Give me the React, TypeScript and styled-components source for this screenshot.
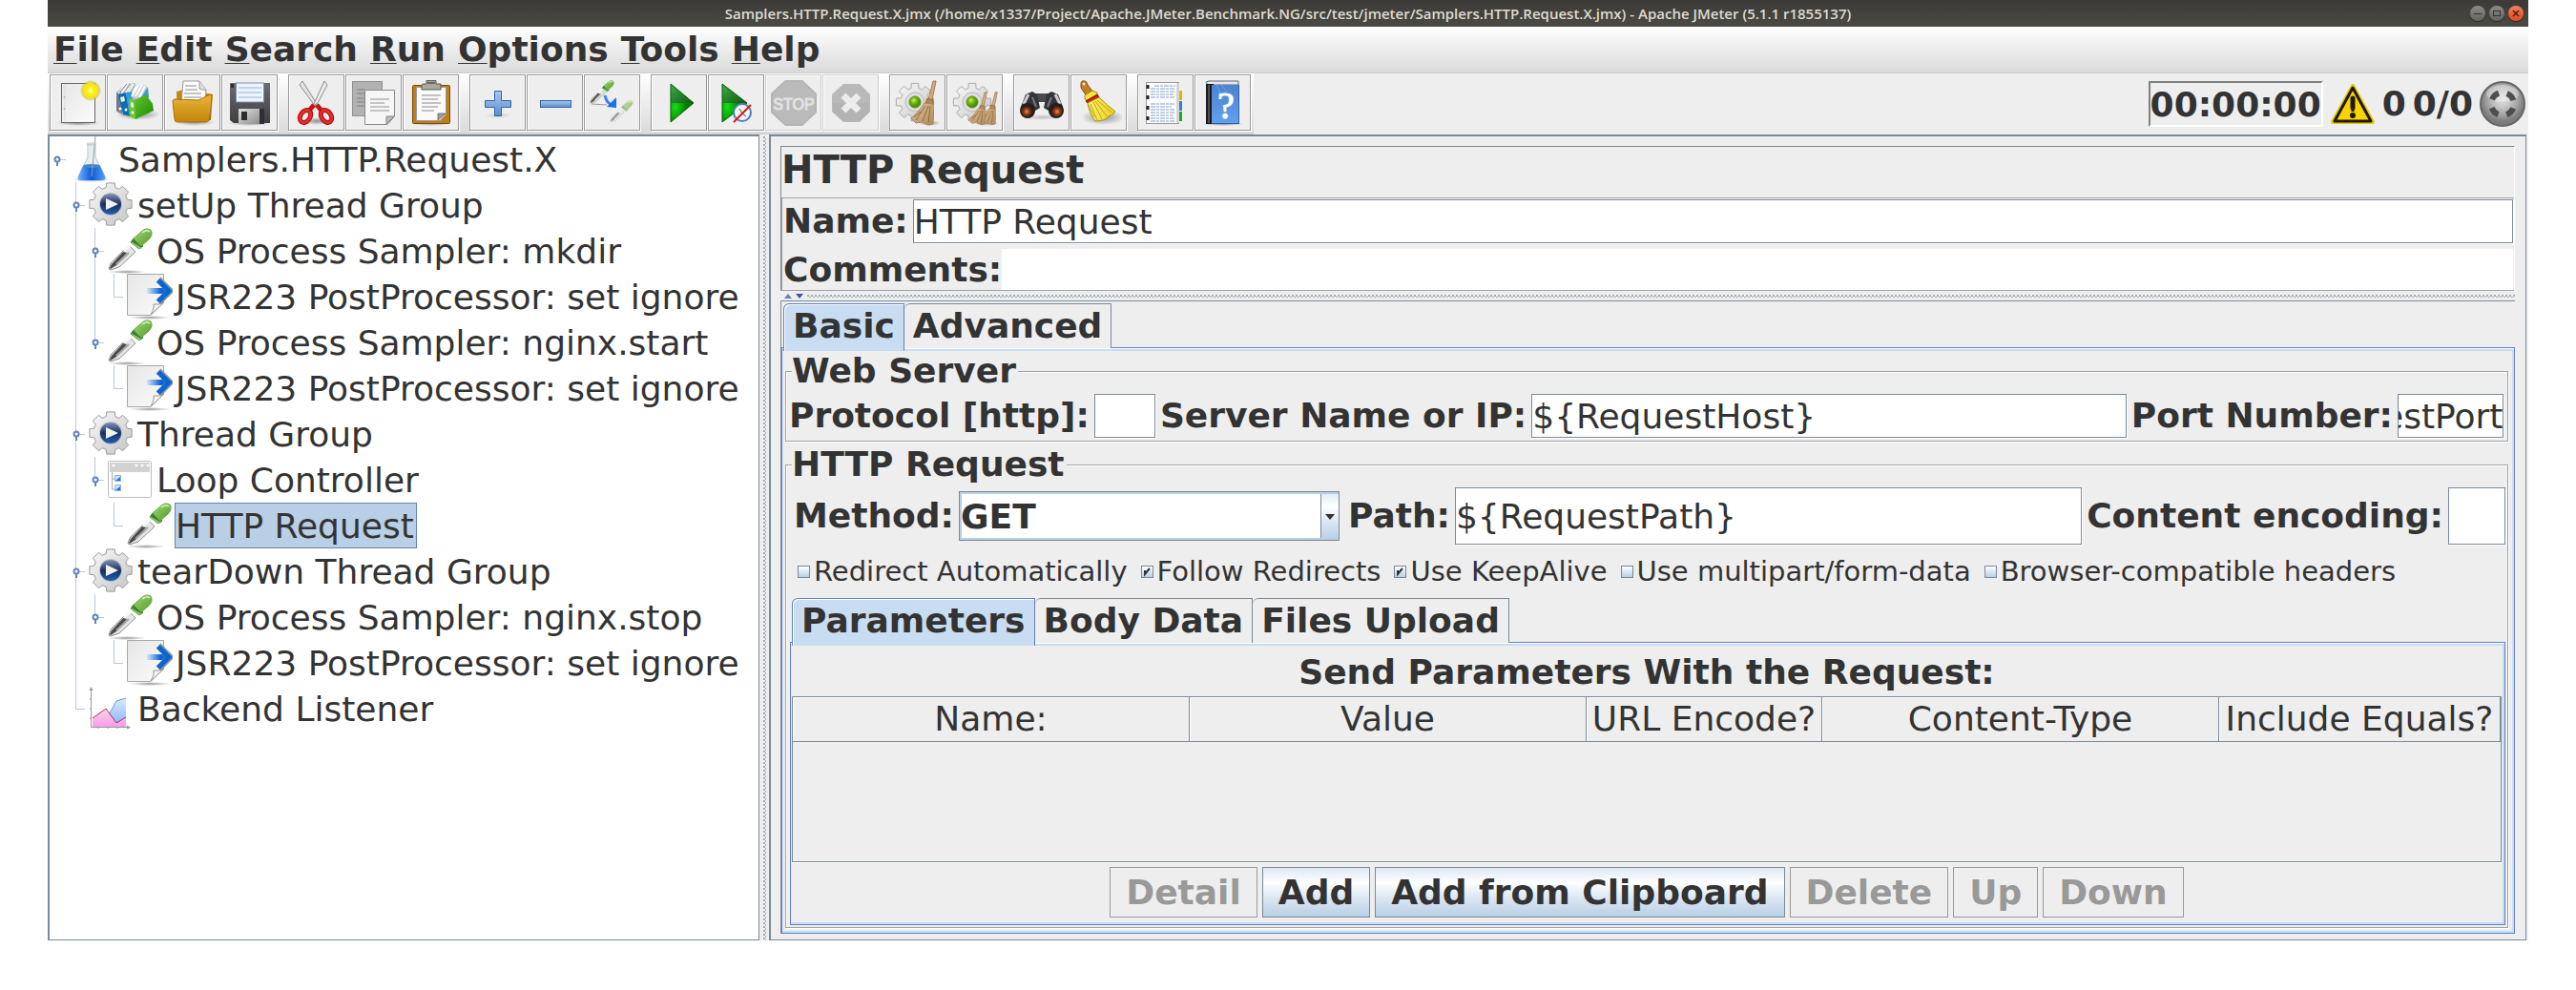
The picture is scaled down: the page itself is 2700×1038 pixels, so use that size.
import React, { useEffect, useRef, useState } from "react";
import styled, { createGlobalStyle, css } from "styled-components";

const SLATE = "#7a8a99";
const BLUE = "#6382bf";
const SKY = "#c8ddf2";
const PANEL = "#eeeeee";
const INK = "#333333";
const LINE = "#a3a3a3";

const GlobalStyle = createGlobalStyle`
  * { box-sizing: border-box; }
  body { margin: 0; background: #fff; }
  body, button, input, select, table {
    font-family: "DejaVu Sans", "Noto Sans", sans-serif;
    color: ${INK};
  }
`;

/* ---------- window frame ---------- */

const Page = styled.div`
  padding: 0 50px;
  font-size: 36px;
  line-height: 42px;
`;

const Frame = styled.div`
  background: ${PANEL};
`;

const TitleBar = styled.header`
  display: grid;
  grid-template-columns: 1fr auto 1fr;
  align-items: center;
  height: 28px;
  padding: 0 5px;
  background: linear-gradient(#3b3a36, #4b4a44);
`;

const Title = styled.h1`
  grid-column: 2;
  margin: 0;
  font: 600 15px/20px "Open Sans", "Noto Sans", sans-serif;
  color: #dfdbd2;
  white-space: nowrap;
`;

const WindowControls = styled.div`
  display: flex;
  justify-content: flex-end;
  gap: 4px;
`;

const WindowButton = styled.button<{ $close?: boolean }>`
  width: 16px;
  height: 16px;
  padding: 0;
  border: 0;
  border-radius: 50%;
  display: flex;
  background: ${(p) => (p.$close ? "linear-gradient(#f4805c, #e0491c)" : "linear-gradient(#8c8b84, #64635d)")};
  box-shadow: 0 1px 1px #2c2b28;
`;

const MenuBar = styled.nav`
  display: flex;
  gap: 13px;
  height: 49px;
  padding: 3px 0 0 6px;
  border-bottom: 1px solid #ccc;
  background: linear-gradient(#fff, #dadada);
`;

const MenuItem = styled.button`
  padding: 0;
  border: 0;
  background: none;
  font-size: 36px;
  line-height: 42px;
  font-weight: bold;
  height: 42px;

  &::first-letter {
    text-decoration: underline;
    text-decoration-thickness: 1px;
    text-underline-offset: 2px;
    text-decoration-skip-ink: none;
  }
`;

const ToolRow = styled.div`
  display: flex;
  justify-content: space-between;
`;

const ToolBar = styled.div`
  display: flex;
  gap: 11px;
  height: 64px;
  padding: 1px 3px 2px 2px;
  background: linear-gradient(#fff, #dadada);
  border-bottom: 1px solid #ccc;
`;

const ToolGroup = styled.div`
  display: flex;
  gap: 1px;
`;

const ToolButton = styled.button`
  width: 59px;
  height: 59px;
  padding: 0;
  display: flex;
  align-items: center;
  justify-content: center;
  border: 1px solid #999;
  background: ${PANEL};
  box-shadow: inset 1px 1px #fff, 1px 1px #fff;

  &:disabled { border-color: #ccc; }
`;

const Status = styled.div`
  display: flex;
  align-items: center;
  gap: 7px;
  padding-right: 3px;
  font-weight: bold;
`;

const Timer = styled.div`
  padding: 2px 0 0;
  border: 2px solid;
  border-color: #808080 #fff #fff #808080;
`;

/* ---------- tree ---------- */

const Workspace = styled.main`
  display: flex;
  padding-right: 2px;
`;

const TreePane = styled.ul`
  flex: 0 0 746px;
  margin: 0;
  padding: 0;
  list-style: none;
  overflow: hidden;
  background: #fff;
  border: solid ${SLATE};
  border-width: 2px 1px 1px 2px;
`;

const TreeRow = styled.li`
  display: flex;
  align-items: center;
  height: 48px;
  white-space: nowrap;
`;

const Guide = styled.span<{ $line: "none" | "half" | "full"; $own: boolean }>`
  flex: 0 0 20px;
  align-self: stretch;
  background-repeat: no-repeat;
  background-image: linear-gradient(${(p) => (p.$line === "none" ? "transparent, transparent" : "#b8c9dd, #b8c9dd")}),
    linear-gradient(${(p) => (p.$own ? "#b8c9dd, #b8c9dd" : "transparent, transparent")});
  background-size: 1px ${(p) => (p.$line === "half" ? "50%" : "100%")}, 10px 1px;
  background-position: 7px 0, 7px 24px;
`;

const Handle = styled.svg`
  display: block;
  width: 20px;
  height: 48px;
`;

const NodeIcon = styled.span`
  flex: 0 0 48px;
  height: 48px;
  margin: 0 2px 0 1px;
  display: flex;
`;

const NodeLabel = styled.span<{ $selected?: boolean }>`
  height: 48px;
  line-height: 48px;
  padding: 0 2px 0 0;
  border: 1px solid transparent;
  border-bottom-width: 0;
  ${(p) => p.$selected && css`
    line-height: 46px;
    padding-top: 1px;
    background: #b8cfe5;
    border-color: ${BLUE};
    border-bottom-width: 1px;
  `}
`;

const dots = css`
  background-color: ${PANEL};
  background-image: radial-gradient(circle at 1px 1px, #a3aeb8 1px, transparent 1px),
    radial-gradient(circle at 3px 3px, #a3aeb8 1px, transparent 1px);
  background-size: 4px 4px;
`;

const ColumnSplitter = styled.div`
  flex: 0 0 10px;
  padding: 2px 3px 0 4px;
  background: ${PANEL};
  &::before {
    content: "";
    display: block;
    width: 3px;
    height: 100%;
    ${dots}
  }
`;

/* ---------- editor ---------- */

const Editor = styled.section`
  flex: 1;
  min-width: 0;
  padding: 10px 11px 6px 10px;
  border: solid ${SLATE};
  border-width: 2px 1px 1px 2px;
`;

const HeadPanel = styled.div`
  border: solid;
  border-width: 1px 1px 0 1px;
  border-color: ${SLATE} #fff #fff ${SLATE};
`;

const EditorTitle = styled.h2`
  margin: 0;
  padding-bottom: 5px;
  font-size: 40px;
  line-height: 48px;
`;

const NamePanel = styled.div`
  display: flex;
  flex-direction: column;
  gap: 6px;
  padding: 1px 1px 0 1px;
  border: solid ${LINE};
  border-width: 1px 0 1px 1px;
`;

const NameRow = styled.div<{ $gap: number }>`
  display: flex;
  align-items: center;
  gap: ${(p) => p.$gap}px;
`;

const FieldLabel = styled.label`
  font-weight: bold;
  white-space: nowrap;
`;

const TextField = styled.input<{ $height?: number; $width?: number; $plain?: boolean }>`
  flex: ${(p) => (p.$width ? `0 0 ${p.$width}px` : "1 1 0")};
  min-width: 0;
  width: ${(p) => (p.$width ? `${p.$width}px` : "auto")};
  height: ${(p) => p.$height ?? 46}px;
  padding: 0;
  border: ${(p) => (p.$plain ? "0" : `1px solid ${SLATE}`)};
  border-radius: 0;
  outline: none;
  background: #fff;
  font-size: 36px;
  box-shadow: ${(p) => (p.$plain ? "none" : "1px 1px #fff")};
`;

const RowSplitter = styled.div`
  display: flex;
  align-items: center;
  gap: 4px;
  height: 10px;
  padding-left: 4px;
  &::after {
    content: "";
    flex: 1;
    height: 3px;
    ${dots}
  }
`;

const Arrow = styled.svg`
  width: 8px;
  height: 5px;
`;

const TabArea = styled.div`
  padding-top: 2px;
  border-top: 1px solid ${SLATE};
  border-left: 1px solid ${SLATE};
`;

const TabList = styled.div`
  display: flex;
  padding-left: 2px;
`;

const Tab = styled.button<{ $active: boolean }>`
  height: 47px;
  margin-bottom: -1px;
  padding: 0 9px 1px;
  font-size: 36px;
  line-height: 42px;
  font-weight: bold;
  border: 1px solid ${SLATE};
  border-left-width: 0;
  border-bottom: 0;
  border-top-left-radius: 6px;
  background: ${PANEL};
  ${(p) => p.$active && css`
    position: relative;
    z-index: 1;
    height: 50px;
    margin-bottom: -4px;
    padding: 0 9px 4px;
    border-color: ${BLUE};
    border-left-width: 1px;
    background: ${SKY};
    box-shadow: inset 1px 1px #fff;
  `}
`;

const TabPane = styled.div<{ $pad: string }>`
  padding: ${(p) => p.$pad};
  border: 1px solid ${BLUE};
  box-shadow: inset 0 1px #fff, inset 0 3px ${SKY}, inset -2px -2px ${SKY}, inset 1px 0 #dfeaf6;
`;

const Group = styled.fieldset<{ $pad: string }>`
  min-width: 0;
  margin: 0;
  padding: ${(p) => p.$pad};
  border: 1px solid ${LINE};
  box-shadow: inset 1px 1px #fff, 1px 1px #fff;
  & + & { margin-top: 3px; }
`;

const Legend = styled.legend`
  margin-left: 4px;
  padding: 0 2px 0 0;
  font-weight: bold;
  background: ${PANEL};
`;

const FormRow = styled.div<{ $indent?: boolean }>`
  display: flex;
  align-items: center;
  gap: 5px;
  padding-left: ${(p) => (p.$indent ? 6 : 1)}px;
`;

const SelectBox = styled.div`
  position: relative;
  flex: 0 0 399px;
  display: flex;
  height: 52px;
  margin-right: 4px;
  &::after {
    content: "";
    position: absolute;
    right: 5px;
    top: 24px;
    border: 5px solid transparent;
    border-top: 6px solid ${INK};
    border-bottom: 0;
    pointer-events: none;
  }
`;

const Select = styled.select`
  appearance: none;
  flex: 1;
  padding: 0 0 0 1px;
  border: 1px solid ${SLATE};
  border-radius: 0;
  font-size: 36px;
  font-weight: bold;
  background: linear-gradient(${SLATE}, ${SLATE}) right 18px top / 1px 100% no-repeat,
    linear-gradient(#dde8f3, #fff 30%, #dde8f3 60%, #b8cfe5) right / 18px 100% no-repeat, #fff;
  box-shadow: inset 2px 2px #b8cfe5, inset 0 -2px #b8cfe5;
`;

const CheckRow = styled.div`
  display: flex;
  align-items: center;
  gap: 14px;
  height: 56px;
  padding-left: 10px;
  font-size: 29px;
  line-height: 34px;
`;

const CheckLabel = styled.label`
  display: flex;
  align-items: center;
  gap: 4px;
  white-space: nowrap;
`;

const CheckBox = styled.input`
  appearance: none;
  width: 13px;
  height: 13px;
  margin: 0;
  border: 1px solid ${SLATE};
  background: linear-gradient(#fff, #b8cfe5);
  &:checked {
    background: url("data:image/svg+xml,%3Csvg xmlns='http://www.w3.org/2000/svg' viewBox='0 0 11 11'%3E%3Cpath d='M3 4v4l5-6' fill='none' stroke='%23333' stroke-width='2'/%3E%3C/svg%3E"),
      linear-gradient(#fff, #b8cfe5);
  }
`;

const InnerTabs = styled.div`
  padding: 0 0 0 2px;
`;

const ParamTitle = styled.h3`
  margin: 0;
  padding: 4px 0 2px;
  font-size: 36px;
  line-height: 46px;
  text-align: center;
`;

const TableBox = styled.div`
  min-height: 174px;
  border: 1px solid ${SLATE};
  box-shadow: 0 1px #fff;
`;

const ParamTable = styled.table`
  width: 100%;
  table-layout: fixed;
  border-spacing: 0;
`;

const HeadCell = styled.th<{ $width?: number }>`
  width: ${(p) => (p.$width ? `${p.$width}px` : "auto")};
  height: 47px;
  padding: 0;
  font-weight: normal;
  white-space: nowrap;
  border-right: 1px solid ${SLATE};
  border-bottom: 1px solid ${SLATE};
  box-shadow: inset 1px 1px #fff;
`;

const ButtonRow = styled.div`
  display: flex;
  justify-content: center;
  gap: 5px;
  padding: 5px 0;
`;

const ActionButton = styled.button`
  height: 53px;
  padding: 0 16px;
  border: 1px solid ${SLATE};
  font-size: 36px;
  font-weight: bold;
  background: linear-gradient(#dde8f3, #fff 30%, #dde8f3 60%, #b8cfe5);
  &:disabled {
    color: #999;
    border-color: #999;
    background: ${PANEL};
  }
`;

/* ---------- drawings ---------- */

const Drawing = styled.svg<{ $size: number }>`
  display: block;
  width: ${(p) => p.$size}px;
  height: ${(p) => p.$size}px;
`;

const HiddenDefs = styled.svg`
  position: absolute;
  width: 0;
  height: 0;
`;

const stops = (...colors: string[]) =>
  colors.map((c, i) => <stop key={i} offset={i / (colors.length - 1)} stopColor={c} />);

const Defs = () => (
  <HiddenDefs aria-hidden="true">
    <defs>
      <linearGradient id="paper" x1="0" y1="0" x2="1" y2="1">{stops("#e6e6e6", "#fbfbfb")}</linearGradient>
      <radialGradient id="sun">
        <stop offset="0" stopColor="#ffffd0" />
        <stop offset="0.3" stopColor="#fff21a" />
        <stop offset="0.7" stopColor="#f2e413" />
        <stop offset="1" stopColor="#a89a30" stopOpacity="0" />
      </radialGradient>
      <linearGradient id="gold" x1="0" y1="0" x2="0" y2="1">{stops("#eab53a", "#c48509")}</linearGradient>
      <linearGradient id="goldBack" x1="0" y1="0" x2="0" y2="1">{stops("#c8900f", "#a06a05")}</linearGradient>
      <linearGradient id="greenBox" x1="0" y1="0" x2="1" y2="1">{stops("#5fc72c", "#1f8a04")}</linearGradient>
      <linearGradient id="dark" x1="0" y1="0" x2="0" y2="1">{stops("#6b6b70", "#3f3f43")}</linearGradient>
      <linearGradient id="metal" x1="0" y1="0" x2="1" y2="1">{stops("#e0e0e0", "#8e8e8e")}</linearGradient>
      <linearGradient id="plus" x1="0" y1="0" x2="0" y2="1">{stops("#a9c8ec", "#5b8fd0")}</linearGradient>
      <linearGradient id="playTop" x1="0" y1="0" x2="1" y2="1">{stops("#3fae46", "#0e5a12")}</linearGradient>
      <radialGradient id="playLow" cx="0.2" cy="0.6">{stops("#12e012", "#007a00")}</radialGradient>
      <linearGradient id="gearFill" x1="0" y1="0" x2="1" y2="1">{stops("#fafafa", "#c4c4c4")}</linearGradient>
      <radialGradient id="lamp" cx="0.4" cy="0.35">{stops("#c8f56a", "#74bd0e", "#4f8f06")}</radialGradient>
      <linearGradient id="navy" x1="0" y1="0" x2="0" y2="1">{stops("#8492b4", "#16305f", "#1f62b4")}</linearGradient>
      <linearGradient id="straw" x1="0" y1="0" x2="1" y2="1">{stops("#e0c59c", "#b08a5c")}</linearGradient>
      <linearGradient id="yellow" x1="0" y1="0" x2="1" y2="0">{stops("#fff36a", "#e8cf1a")}</linearGradient>
      <radialGradient id="lens">{stops("#f08a4a", "#9a3c12", "#2a1a14")}</radialGradient>
      <linearGradient id="book" x1="0" y1="0" x2="0" y2="1">{stops("#4a83d2", "#62a0ee")}</linearGradient>
      <radialGradient id="knob" cx="0.5" cy="0.4">{stops("#dedede", "#c8c8c8", "#a8a8a8", "#7c7c7c")}</radialGradient>
      <linearGradient id="liquid" x1="0" y1="0" x2="1" y2="0">{stops("#6fb2ff", "#0a5bd6", "#5aa0f6")}</linearGradient>
      <linearGradient id="bulb" x1="0" y1="0" x2="1" y2="1">{stops("#a5d873", "#4f9a2c")}</linearGradient>
      <linearGradient id="arrowFade" x1="0" y1="0" x2="1" y2="0">
        <stop offset="0" stopColor="#1070e0" stopOpacity="0.1" />
        <stop offset="0.7" stopColor="#0b64d8" />
      </linearGradient>
      <linearGradient id="areaBlue" x1="0" y1="0" x2="0" y2="1">{stops("#dcebff", "#7fb2f5")}</linearGradient>
      <linearGradient id="areaPink" x1="0" y1="0" x2="0" y2="1">{stops("#fbd8d8", "#f79af0")}</linearGradient>
      <radialGradient id="shade">
        <stop offset="0" stopColor="#000" stopOpacity="0.4" />
        <stop offset="1" stopColor="#000" stopOpacity="0" />
      </radialGradient>
    </defs>
  </HiddenDefs>
);

function gearPath(cx: number, cy: number, outer: number, root: number) {
  const points: string[] = [];
  for (let i = 0; i < 8; i++) {
    const mid = (i * Math.PI) / 4 - Math.PI / 2;
    const corner = (r: number, a: number) => `${(cx + r * Math.cos(mid + a)).toFixed(2)} ${(cy + r * Math.sin(mid + a)).toFixed(2)}`;
    points.push(corner(root, -0.27), corner(outer, -0.19), corner(outer, 0.19), corner(root, 0.27));
  }
  return `M${points.join("L")}Z`;
}

const Dropper = () => (
  <g>
    <path d="M3 37 L22 18 L29 25 L12 41 L3 44 L1 43Z" fill="#e4e6e6" stroke="#8f9294" strokeWidth="1" />
    <path d="M4 38 L16 25 L20 26 L9 39 L3 43 L2 42Z" fill="#4c4c4c" />
    <path d="M9 38 L22 26" stroke="#a4a4a4" strokeWidth="2" />
    <path d="M17 24 L26 16" stroke="#fafafa" strokeWidth="3" />
    <path d="M27 11 L37 19 L33 22 L24 15Z" fill="#3f7d2c" stroke="#3f7d2c" strokeWidth="1" />
    <path d="M27 11 L35 4 Q40 -1 45 2 Q48 7 43 12 L35 19Z" fill="url(#bulb)" stroke="#68ad44" strokeWidth="1" />
    <path d="M24 14 L36 21 L33 22 L25 16Z" fill="#8cc66a" />
    <path d="M36 5 Q41 1 44 4" stroke="#c6eaa4" strokeWidth="2" fill="none" />
  </g>
);

const Broom = () => (
  <g>
    <path d="M38 1 L41 1 L37 21 L33 21Z" fill="#d3b083" stroke="#a07c50" strokeWidth="1" />
    <path d="M32 19 L38 21 L38 26 L30 25Z" fill="#b08a5c" stroke="#8c6842" strokeWidth="1" />
    <path d="M29 24 L38 25 Q39 35 38 46 L33 47 L26 44 L20 45 L15 40 Q23 34 29 24Z" fill="url(#straw)" stroke="#a88456" strokeWidth="1" />
    <path d="M30 27 L20 42 M33 27 L27 43 M35 27 L33 45 M25 33 L18 39" stroke="#8f6a3c" strokeWidth="1" />
  </g>
);

const TOOL_ART: Record<string, React.ReactNode> = {
  New: (
    <>
      <ellipse cx="24" cy="45" rx="23" ry="3" fill="url(#shade)" />
      <rect x="6.500" y="3.500" width="35" height="41" fill="url(#paper)" stroke="#666" />
      <path d="M10 5v38" stroke="#ddd" />
      <circle cx="9.500" cy="18" r="1" fill="#bbb" /><circle cx="9.500" cy="30" r="1" fill="#bbb" />
      <circle cx="37" cy="11" r="11" fill="url(#sun)" />
    </>
  ),
  Templates: (
    <>
      <ellipse cx="27" cy="36" rx="23" ry="6" fill="url(#shade)" />
      <path d="M4 13 L14 3 L23 3 L28 12 L28 34 L12 38 L4 33Z" fill="#aab4bc" />
      <path d="M4 13 L9 11 L10 35 L4 32Z" fill="#6f7c86" />
      <path d="M6 14 L14 3 M9 15 L17 2 M12 15 L20 3 M15 15 L22 4 M19 17 L25 6 M22 17 L29 5 M25 17 L33 5" stroke="#f4f4f4" strokeWidth="2" />
      <path d="M7 13 L15 4 M11 14 L19 4 M21 16 L28 6" stroke="#8c9298" />
      <path d="M6 15 L14 13 L18 38 L11 36Z" fill="#0a6cb4" /><path d="M14 13 L20 12 L22 36 L18 38Z" fill="#2b9be0" />
      <path d="M19 17 L27 6 L35 5 L38 18 L30 22Z" fill="#c9ced2" />
      <path d="M20 17 L27 6 M24 17 L31 5 M28 18 L34 6" stroke="#fff" strokeWidth="2" />
      <path d="M30 18 L37 7 L38 18Z" fill="#3f9bd0" />
      <path d="M17 19 L23 21 L24 41 L18 38Z" fill="#6cc82e" />
      <path d="M23 21 L35 15 L42 25 L43 32 L24 41Z" fill="url(#greenBox)" />
      <path d="M8 18 l4 -1 1 5 -4 1Z M19 23 l3 1 0 5 -3 -1Z" fill="#e8f6e0" />
      <circle cx="14" cy="31" r="1.500" fill="#fff" /><circle cx="21" cy="34" r="1.500" fill="#fff" /><circle cx="8" cy="30" r="1.500" fill="#fff" />
    </>
  ),
  Open: (
    <>
      <ellipse cx="26" cy="44" rx="21" ry="4" fill="url(#shade)" />
      <path d="M7 12 L14 10 L40 14 L45 15 L43 42 L8 42Z" fill="url(#goldBack)" />
      <path d="M14 1 L31 1 L38 10 L37 25 L12 25Z" fill="#fdfdfd" stroke="#999" />
      <path d="M31 1 L31 9 L38 11" fill="#e0e0e0" stroke="#999" />
      <path d="M16 6h12 M16 10h13 M15 14h18 M15 18h18" stroke="#8c8c8c" />
      <path d="M3 22 Q3 20 6 20 L30 21 L38 17 L44 15 L43 30 L41 42 Q40 44 38 44 L8 44 Q5 44 5 41Z" fill="url(#gold)" stroke="#a87208" />
    </>
  ),
  Save: (
    <>
      <ellipse cx="24" cy="45" rx="23" ry="3" fill="url(#shade)" />
      <path d="M3 3 H45 V45 H7 L3 42Z" fill="url(#dark)" />
      <rect x="4" y="4" width="3" height="4" fill="#2c2c2c" />
      <rect x="9.500" y="3" width="29" height="20" fill="#eef4fc" stroke="#7a94b4" />
      <path d="M12 8h24M12 13h24M12 18h24" stroke="#8fb3dc" />
      <rect x="12" y="30" width="22" height="16" fill="url(#metal)" />
      <rect x="15" y="33" width="6" height="9" fill="#2c2c2e" />
      <rect x="34" y="30" width="5" height="16" fill="#2f2f33" />
    </>
  ),
  Cut: (
    <>
      <ellipse cx="24" cy="43" rx="14" ry="4" fill="url(#shade)" />
      <path d="M9 1 L6 5 L22 27 L26 28Z" fill="#e2e2e2" stroke="#8a8a8a" />
      <path d="M32 1 L35 5 L25 24 L20 27Z" fill="#ededed" stroke="#8a8a8a" />
      <path d="M21 26 L16 32 M24 26 L29 32" stroke="#c41414" strokeWidth="5" />
      <ellipse cx="12" cy="38" rx="5" ry="7" transform="rotate(35 12 38)" fill="none" stroke="#a80f0f" strokeWidth="5" />
      <ellipse cx="12" cy="38" rx="5" ry="7" transform="rotate(35 12 38)" fill="none" stroke="#e62a2a" strokeWidth="3" />
      <ellipse cx="34" cy="38" rx="5" ry="7" transform="rotate(-35 34 38)" fill="none" stroke="#a80f0f" strokeWidth="5" />
      <ellipse cx="34" cy="38" rx="5" ry="7" transform="rotate(-35 34 38)" fill="none" stroke="#e62a2a" strokeWidth="3" />
    </>
  ),
  Copy: (
    <>
      <rect x="1.500" y="1.500" width="31" height="36" fill="#b2b2b2" stroke="#8f8f8f" />
      <path d="M6 10h8M6 14h8M6 19h8M6 23h8M6 27h8" stroke="#989898" strokeWidth="2" />
      <path d="M14.500 10.500 H45.500 V38 L38 46.500 H14.500Z" fill="#f6f6f6" stroke="#8a8a8a" />
      <path d="M37 46 V38 H45Z" fill="#bdbdbd" stroke="#888" />
      <path d="M20 20h20M20 24h15M20 28h20M20 32h20" stroke="#c4c4c4" strokeWidth="2" />
    </>
  ),
  Paste: (
    <>
      <ellipse cx="24" cy="45" rx="22" ry="3" fill="url(#shade)" />
      <rect x="4.500" y="5.500" width="39" height="40" rx="1" fill="#c07d1c" stroke="#7d4a06" />
      <path d="M8.500 7.500 H39.500 V36 L33 42.500 H8.500Z" fill="#fafafa" stroke="#999" />
      <path d="M31 42 V35 H39Z" fill="#9c9c9c" stroke="#777" />
      <path d="M14 16h20M14 20h17M14 24h20M14 28h17M14 32h13" stroke="#c2c2c2" strokeWidth="2" />
      <path d="M15 4 H19 V0.500 H29 V4 H34 V10 H14 V5Z" fill="#a9a99f" stroke="#5d5d56" />
      <path d="M20 3h8" stroke="#6a6a64" strokeWidth="2" />
    </>
  ),
  "Expand All": (
    <>
      <ellipse cx="24" cy="37" rx="14" ry="3" fill="url(#shade)" opacity="0.400" />
      <path d="M20.500 11.500 h7 v10 h10 v7 h-10 v9 h-7 v-9 h-10 v-7 h10Z" fill="url(#plus)" stroke="#3465a4" />
    </>
  ),
  "Collapse All": <rect x="8.500" y="21.500" width="32" height="7" fill="url(#plus)" stroke="#3465a4" />,
  Toggle: (
    <>
      <g transform="scale(0.550)"><Dropper /></g>
      <g transform="translate(21 21) scale(0.520)" opacity="0.550"><Dropper /></g>
      <path d="M2 25 L18 26" stroke="#999" />
      <path d="M16 16 Q18 25 24 26" fill="none" stroke="#2f83ff" strokeWidth="3" />
      <path d="M28 18 V29 L18 28Z" fill="#1a6df5" />
    </>
  ),
  Start: (
    <>
      <path d="M15 4 L39 24 L15 44Z" fill="url(#playLow)" />
      <path d="M15 4 L39 24 L15 24Z" fill="url(#playTop)" />
      <path d="M15 4 L39 24 L15 44Z" fill="none" stroke="#0b5a0b" />
    </>
  ),
  "Start no pauses": (
    <>
      <path d="M9 4 L35 24 L9 44Z" fill="url(#playLow)" />
      <path d="M9 4 L35 24 L9 24Z" fill="url(#playTop)" />
      <path d="M9 4 L35 24 L9 44Z" fill="none" stroke="#0b5a0b" />
      <circle cx="30" cy="34" r="9" fill="#f2f5f8" stroke="#4a80bd" strokeWidth="2" />
      <path d="M27 30 L30 35 L34 38 M30 35 L33 31" fill="none" stroke="#444" />
      <path d="M21 44 L39 26" stroke="#e01414" strokeWidth="2" />
    </>
  ),
  Stop: (
    <>
      <path d="M15 0 H33 L48 14 V34 L33 48 H15 L0 34 V14Z" fill="#b4b4b4" />
      <path d="M15 2 H33 L46 15 V33 L33 46 H15 L2 33 V15Z" fill="#bababa" />
      <text x="24" y="31" textAnchor="middle" fontFamily="Liberation Sans, sans-serif" fontSize="16" fill="#e2e2e2" stroke="#e2e2e2" strokeWidth="1">STOP</text>
    </>
  ),
  Shutdown: (
    <>
      <path d="M16 4 H33 L44 15 V33 L33 44 H16 L4 33 V15Z" fill="#b9b9b9" />
      <path d="M5 24 H43 V33 L33 43 H16 L5 33Z" fill="#aeaeae" opacity="0.500" />
      <path d="M16 16 L32 32 M32 16 L16 32" stroke="#ececec" strokeWidth="7" />
    </>
  ),
  Clear: (
    <>
      <path d={gearPath(21, 23, 20, 15)} fill="url(#gearFill)" stroke="#aaa" />
      <circle cx="21" cy="23" r="10" fill="#ddd" stroke="#bbb" />
      <circle cx="21" cy="23" r="6" fill="url(#lamp)" stroke="#5f8f1e" />
      <ellipse cx="36" cy="45" rx="12" ry="3" fill="url(#shade)" />
      <g transform="translate(2 0)"><Broom /></g>
    </>
  ),
  "Clear All": (
    <>
      <path d={gearPath(21, 23, 20, 15)} fill="url(#gearFill)" stroke="#aaa" />
      <circle cx="21" cy="23" r="10" fill="#ddd" stroke="#bbb" />
      <circle cx="21" cy="23" r="6" fill="url(#lamp)" stroke="#5f8f1e" />
      <ellipse cx="36" cy="45" rx="13" ry="3" fill="url(#shade)" />
      <g transform="translate(17 12) scale(0.740)"><Broom /></g>
      <g transform="translate(6 12) scale(0.740)"><Broom /></g>
    </>
  ),
  Search: (
    <>
      <ellipse cx="24" cy="39" rx="23" ry="3" fill="url(#shade)" opacity="0.500" />
      <rect x="17" y="14" width="14" height="9" fill="#4a4a4e" />
      <path d="M14 12 L19 15 L22 29 L14 34 L2 28 L7 15Z" fill="#34343a" />
      <path d="M34 12 L29 15 L26 29 L34 34 L46 28 L41 15Z" fill="#34343a" />
      <path d="M10 15 L5 25 M38 15 L43 25" stroke="#c9ccd0" strokeWidth="3" />
      <path d="M14 18 L18 28 M34 18 L30 28" stroke="#787c80" strokeWidth="2" />
      <circle cx="9" cy="32" r="8" fill="#22201f" /><circle cx="39" cy="32" r="8" fill="#22201f" />
      <ellipse cx="8" cy="33" rx="6" ry="6" fill="url(#lens)" /><ellipse cx="40" cy="33" rx="6" ry="6" fill="url(#lens)" />
    </>
  ),
  "Reset Search": (
    <>
      <ellipse cx="28" cy="39" rx="23" ry="8" fill="url(#shade)" />
      <path d="M5 4 Q5 0 9 1 Q11 1 12 5 L18 13 L11 17 L5 8Z" fill="#c47f22" stroke="#83500c" />
      <circle cx="8" cy="4" r="1.500" fill="#f4e8d0" />
      <path d="M9 16 L17 11 L22 13 L22 18 L13 22 L9 20Z" fill="#f6e63c" stroke="#a8901a" />
      <path d="M10 22 L22 15 L24 18 L12 24Z" fill="#d01c1c" stroke="#8a0c0c" />
      <path d="M12 24 L24 18 Q32 26 41 33 Q38 37 34 38 Q30 43 20 43 Q14 36 12 24Z" fill="url(#yellow)" stroke="#a8901a" />
      <path d="M15 25 L22 42 M18 23 L27 41 M20 22 L32 38 M22 21 L37 34 M13 26 L19 39" stroke="#bda41a" />
    </>
  ),
  "Function Helper": (
    <>
      <rect x="36" y="11" width="5" height="10" fill="#f0b000" /><rect x="36" y="22" width="5" height="10" fill="#2f7fe8" /><rect x="36" y="33" width="5" height="10" fill="#22a822" />
      <rect x="3.500" y="2.500" width="34" height="43" fill="#fdfdfd" stroke="#9c9c9c" />
      <rect x="35" y="3" width="3" height="42" fill="#d4d4d4" />
      <path d="M5 5v4M5 16v4M5 27v4M5 38v4" stroke="#222" strokeWidth="3" />
      <path d="M12 6H34M8 9H34M8 12H34M8 15H32M8 18H34M8 25H34M8 28H30M8 31H34M8 34H34M8 37H32M8 40H34M8 43H34" stroke="#7f9fd2" strokeDasharray="5 1 3 1" />
    </>
  ),
  Help: (
    <>
      <ellipse cx="24" cy="46" rx="22" ry="2" fill="url(#shade)" />
      <path d="M6 2 L9 1 H40 V5 H8Z" fill="#e8e8e8" stroke="#5a6470" />
      <rect x="6" y="4" width="8" height="42" fill="#1c1c1e" />
      <path d="M9 5 V45" stroke="#505054" strokeWidth="2" />
      <rect x="12" y="5" width="29" height="41" fill="url(#book)" />
      <path d="M40.500 5 V46 M12 45.500 H41" stroke="#2d5fa8" />
      <path d="M17 5 L24 20 M22 5 L29 13" stroke="#86aee4" opacity="0.700" />
      <text x="27" y="40" textAnchor="middle" fontFamily="Liberation Serif, serif" fontSize="40" fill="#fff" stroke="#fff">?</text>
    </>
  ),
};

const ThreadIcon = () => (
  <Drawing $size={48} viewBox="0 0 48 48">
    <path d={gearPath(23, 23, 22.500, 18)} fill="url(#gearFill)" stroke="#9a9a9a" strokeLinejoin="round" />
    <circle cx="23" cy="23" r="12" fill="#b8bfcc" />
    <circle cx="23" cy="23" r="11" fill="url(#navy)" />
    <path d="M18 17 L31 23 L18 29Z" fill="#f2f2f2" />
  </Drawing>
);

const NODE_ART: Record<string, React.ReactNode> = {
  plan: (
    <Drawing $size={48} viewBox="0 0 48 48">
      <ellipse cx="23" cy="45" rx="20" ry="3" fill="url(#shade)" />
      <path d="M19 8 V22 L9 42 Q8 46 12 46 H34 Q38 46 37 42 L27 22 V8" fill="#e6eef2" stroke="#b9c4ca" />
      <path d="M14 31 L9 42 Q8 46 12 46 H34 Q38 46 37 42 L32 31Z" fill="url(#liquid)" />
      <ellipse cx="23" cy="31" rx="9" ry="2" fill="#3f86d0" />
      <path d="M27 0 L23 42" stroke="#9a9fa3" />
      <ellipse cx="23" cy="8" rx="5" ry="1" fill="none" stroke="#b9c4ca" />
    </Drawing>
  ),
  thread: <ThreadIcon />,
  sampler: (
    <Drawing $size={48} viewBox="0 0 48 48">
      <ellipse cx="20" cy="46" rx="20" ry="2" fill="url(#shade)" />
      <Dropper />
    </Drawing>
  ),
  post: (
    <Drawing $size={48} viewBox="0 0 48 48">
      <ellipse cx="24" cy="46" rx="22" ry="2" fill="url(#shade)" />
      <path d="M0.500 0.500 H38.500 V30 L25 43.500 H0.500Z" fill="url(#paper)" stroke="#a8a8a8" />
      <path d="M25 43 Q29 36 28 32 Q33 33 39 30Z" fill="#f4f4f4" stroke="#999" />
      <rect x="21" y="15" width="20" height="6" fill="url(#arrowFade)" />
      <path d="M33 6 L45 18 L33 30" fill="none" stroke="#8b9299" strokeWidth="7" />
      <path d="M33 7 L44 18 L33 29" fill="none" stroke="#0866d4" strokeWidth="5" />
    </Drawing>
  ),
  loop: (
    <Drawing $size={48} viewBox="0 0 48 48">
      <rect x="0.500" y="4.500" width="45" height="38" rx="1" fill="#fff" stroke="#bcbcbc" />
      <rect x="2" y="6" width="42" height="10" fill="#d2d2d2" />
      <path d="M4 8h4l-2 3Z M28 8h4l-2 3Z M34 8h4l-2 3Z M40 8h4l-2 3Z" fill="#fff" />
      <path d="M4.500 16 V34 H8 M4.500 23 H8" fill="none" stroke="#aaa" />
      <rect x="7.500" y="19.500" width="6" height="6" fill="#cfe2fb" stroke="#8db4e6" /><path d="M8 25 L13 21 V25Z" fill="#1d6fe0" />
      <rect x="7.500" y="29.500" width="6" height="6" fill="#cfe2fb" stroke="#8db4e6" /><path d="M8 35 L13 31 V35Z" fill="#1d6fe0" />
    </Drawing>
  ),
  listener: (
    <Drawing $size={48} viewBox="0 0 48 48">
      <path d="M4 40 L18 36 L29 16 L39 13 V43 H4Z" fill="url(#areaBlue)" />
      <path d="M4 40 L18 36 L29 16 L39 13" fill="none" stroke="#5e9cf0" />
      <path d="M4 34 L18 24 L29 39 L39 33 V43 H4Z" fill="url(#areaPink)" />
      <path d="M4 34 L18 24 L29 39 L39 33" fill="none" stroke="#b8256a" />
      <path d="M2.500 2 V43.500 H42 M1 14h2M1 24h2M1 34h2 M10 45v-2M20 45v-2M30 45v-2" fill="none" stroke="#999" />
      <path d="M0.500 5 L2.500 1 L4.500 5Z M40 41.500 L44 43.500 L40 45.500Z" fill="#999" />
    </Drawing>
  ),
};

/* ---------- data ---------- */

const MENU = ["File", "Edit", "Search", "Run", "Options", "Tools", "Help"];

const TOOLS = [
  ["New", "Templates", "Open", "Save"],
  ["Cut", "Copy", "Paste"],
  ["Expand All", "Collapse All", "Toggle"],
  ["Start", "Start no pauses", "Stop", "Shutdown"],
  ["Clear", "Clear All"],
  ["Search", "Reset Search"],
  ["Function Helper", "Help"],
];

type Node = { icon: string; label: string; children?: Node[] };

const post: Node = { icon: "post", label: "JSR223 PostProcessor: set ignore" };

const TREE: Node[] = [
  {
    icon: "plan",
    label: "Samplers.HTTP.Request.X",
    children: [
      {
        icon: "thread",
        label: "setUp Thread Group",
        children: [
          { icon: "sampler", label: "OS Process Sampler: mkdir", children: [post] },
          { icon: "sampler", label: "OS Process Sampler: nginx.start", children: [post] },
        ],
      },
      {
        icon: "thread",
        label: "Thread Group",
        children: [{ icon: "loop", label: "Loop Controller", children: [{ icon: "sampler", label: "HTTP Request" }] }],
      },
      {
        icon: "thread",
        label: "tearDown Thread Group",
        children: [{ icon: "sampler", label: "OS Process Sampler: nginx.stop", children: [post] }],
      },
      { icon: "listener", label: "Backend Listener" },
    ],
  },
];

const CHECKS: [string, boolean][] = [
  ["Redirect Automatically", false],
  ["Follow Redirects", true],
  ["Use KeepAlive", true],
  ["Use multipart/form-data", false],
  ["Browser-compatible headers", false],
];

const COLUMNS: [string, number?][] = [["Name:"], ["Value"], ["URL Encode?", 247], ["Content-Type"], ["Include Equals?", 295]];

const ACTIONS: [string, boolean][] = [
  ["Detail", false],
  ["Add", true],
  ["Add from Clipboard", true],
  ["Delete", false],
  ["Up", false],
  ["Down", false],
];

/* width of the closing brace, which stays scrolled out of the port field */
const BRACE_WIDTH = 23;

/* ---------- components ---------- */

function renderNodes(nodes: Node[], trail: boolean[], selected: string, select: (s: string) => void): React.ReactNode[] {
  return nodes.flatMap((node, i) => {
    const more = i < nodes.length - 1;
    const root = trail.length === 0;
    return [
      <TreeRow key={`${trail.length}-${i}-${node.label}`} onClick={() => select(node.label)}>
        {trail.map((open, k) => (
          <Guide key={k} $line={open ? "full" : "none"} $own={false} />
        ))}
        <Guide $line={root ? "none" : more ? "full" : "half"} $own>
          {node.children && (
            <Handle viewBox="0 0 20 48">
              <path d="M8 26v5" stroke={BLUE} strokeWidth="2" />
              <circle cx="8" cy="24" r="2.500" fill="#fff" stroke={BLUE} strokeWidth="2" />
            </Handle>
          )}
        </Guide>
        <NodeIcon>{NODE_ART[node.icon]}</NodeIcon>
        <NodeLabel $selected={node.label === selected}>{node.label}</NodeLabel>
      </TreeRow>,
      ...(node.children ? renderNodes(node.children, [...trail, !root && more], selected, select) : []),
    ];
  });
}

function Tabs({ names, active, onPick }: { names: string[]; active: string; onPick: (n: string) => void }) {
  return (
    <TabList role="tablist">
      {names.map((n) => (
        <Tab key={n} role="tab" aria-selected={n === active} $active={n === active} onClick={() => onPick(n)}>
          {n}
        </Tab>
      ))}
    </TabList>
  );
}

export default function App() {
  const [selected, setSelected] = useState("HTTP Request");
  const [tab, setTab] = useState("Basic");
  const [innerTab, setInnerTab] = useState("Parameters");
  const port = useRef<HTMLInputElement>(null);

  useEffect(() => {
    const field = port.current;
    if (field) field.scrollLeft = field.scrollWidth - field.clientWidth - BRACE_WIDTH;
  }, []);

  return (
    <Page>
      <GlobalStyle />
      <Defs />
      <Frame>
        <TitleBar>
          <Title>
            Samplers.HTTP.Request.X.jmx (/home/x1337/Project/Apache.JMeter.Benchmark.NG/src/test/jmeter/Samplers.HTTP.Request.X.jmx) - Apache JMeter (5.1.1 r1855137)
          </Title>
          <WindowControls>
            <WindowButton aria-label="Minimize">
              <Drawing $size={16} viewBox="0 0 16 16"><path d="M4 8.500h8" stroke="#35342f" /></Drawing>
            </WindowButton>
            <WindowButton aria-label="Maximize">
              <Drawing $size={16} viewBox="0 0 16 16"><rect x="4.500" y="5.500" width="7" height="5" fill="none" stroke="#35342f" /></Drawing>
            </WindowButton>
            <WindowButton aria-label="Close" $close>
              <Drawing $size={16} viewBox="0 0 16 16"><path d="M5 5l6 6M11 5l-6 6" stroke="#4a2010" strokeWidth="1.500" /></Drawing>
            </WindowButton>
          </WindowControls>
        </TitleBar>

        <MenuBar>
          {MENU.map((m) => <MenuItem key={m}>{m}</MenuItem>)}
        </MenuBar>

        <ToolRow>
          <ToolBar role="toolbar">
            {TOOLS.map((group) => (
              <ToolGroup key={group[0]}>
                {group.map((name) => (
                  <ToolButton key={name} aria-label={name} disabled={name === "Stop" || name === "Shutdown"}>
                    <Drawing $size={48} viewBox="0 0 48 48">{TOOL_ART[name]}</Drawing>
                  </ToolButton>
                ))}
              </ToolGroup>
            ))}
          </ToolBar>
          <Status>
            <Timer>00:00:00</Timer>
            <Drawing $size={48} viewBox="0 0 48 48">
              <path d="M24 5 L45 43 H3Z" fill="#fbd400" stroke="#e8c800" strokeWidth="4" strokeLinejoin="round" />
              <path d="M24 7 L43 42 H5Z" fill="#fbd400" stroke="#1c1a10" strokeWidth="3" strokeLinejoin="round" />
              <path d="M24 18 V28" stroke="#1c1a10" strokeWidth="5" strokeLinecap="round" />
              <path d="M24 28 V32" stroke="#1c1a10" strokeWidth="3" />
              <circle cx="24" cy="36" r="3" fill="#1c1a10" />
            </Drawing>
            <span>0</span>
            <span>0/0</span>
            <Drawing $size={48} viewBox="0 0 48 48">
              <circle cx="24" cy="24" r="23" fill="url(#knob)" stroke="#666" strokeWidth="2" />
              <ellipse cx="24" cy="13" rx="17" ry="9" fill="#fff" opacity="0.350" />
              <circle cx="24" cy="24" r="12" fill="none" stroke="#4e4e4e" strokeWidth="6" strokeDasharray="10 8.850" strokeDashoffset="-4.420" />
            </Drawing>
          </Status>
        </ToolRow>

        <Workspace>
          <TreePane>{renderNodes(TREE, [], selected, setSelected)}</TreePane>
          <ColumnSplitter />
          <Editor>
            <HeadPanel>
              <EditorTitle>HTTP Request</EditorTitle>
              <NamePanel>
                <NameRow $gap={5}>
                  <FieldLabel htmlFor="name">Name:</FieldLabel>
                  <TextField id="name" defaultValue="HTTP Request" />
                </NameRow>
                <NameRow $gap={0}>
                  <FieldLabel htmlFor="comments">Comments:</FieldLabel>
                  <TextField id="comments" $plain $height={43} />
                </NameRow>
              </NamePanel>
            </HeadPanel>
            <RowSplitter>
              <Arrow viewBox="0 0 8 5"><path d="M0 5L4 0L8 5Z" fill={BLUE} /></Arrow>
              <Arrow viewBox="0 0 8 5"><path d="M0 0L4 5L8 0Z" fill="#3b57a0" /></Arrow>
            </RowSplitter>

            <TabArea>
              <Tabs names={["Basic", "Advanced"]} active={tab} onPick={setTab} />
              <TabPane $pad="3px 6px 5px 3px">
                <Group $pad="3px 4px 3px 2px">
                  <Legend>Web Server</Legend>
                  <FormRow>
                    <FieldLabel htmlFor="protocol">Protocol [http]:</FieldLabel>
                    <TextField id="protocol" $width={64} />
                    <FieldLabel htmlFor="server">Server Name or IP:</FieldLabel>
                    <TextField id="server" defaultValue="${RequestHost}" />
                    <FieldLabel htmlFor="port">Port Number:</FieldLabel>
                    <TextField id="port" ref={port} $width={111} defaultValue="${RequestPort}" />
                  </FormRow>
                </Group>
                <Group $pad="3px 2px 2px 2px">
                  <Legend>HTTP Request</Legend>
                  <FormRow $indent>
                    <FieldLabel htmlFor="method">Method:</FieldLabel>
                    <SelectBox>
                      <Select id="method" defaultValue="GET">
                        <option>GET</option>
                      </Select>
                    </SelectBox>
                    <FieldLabel htmlFor="path">Path:</FieldLabel>
                    <TextField id="path" $height={60} defaultValue="${RequestPath}" />
                    <FieldLabel htmlFor="encoding">Content encoding:</FieldLabel>
                    <TextField id="encoding" $height={60} $width={60} />
                  </FormRow>
                  <CheckRow>
                    {CHECKS.map(([label, on]) => (
                      <CheckLabel key={label}>
                        <CheckBox type="checkbox" defaultChecked={on} />
                        {label}
                      </CheckLabel>
                    ))}
                  </CheckRow>
                  <InnerTabs>
                    <Tabs names={["Parameters", "Body Data", "Files Upload"]} active={innerTab} onPick={setInnerTab} />
                    <TabPane $pad="4px 3px 2px 1px">
                      <ParamTitle>Send Parameters With the Request:</ParamTitle>
                      <TableBox>
                        <ParamTable>
                          <thead>
                            <tr>
                              {COLUMNS.map(([name, width]) => (
                                <HeadCell key={name} $width={width}>{name}</HeadCell>
                              ))}
                            </tr>
                          </thead>
                        </ParamTable>
                      </TableBox>
                      <ButtonRow>
                        {ACTIONS.map(([name, on]) => (
                          <ActionButton key={name} disabled={!on}>{name}</ActionButton>
                        ))}
                      </ButtonRow>
                    </TabPane>
                  </InnerTabs>
                </Group>
              </TabPane>
            </TabArea>
          </Editor>
        </Workspace>
      </Frame>
    </Page>
  );
}
